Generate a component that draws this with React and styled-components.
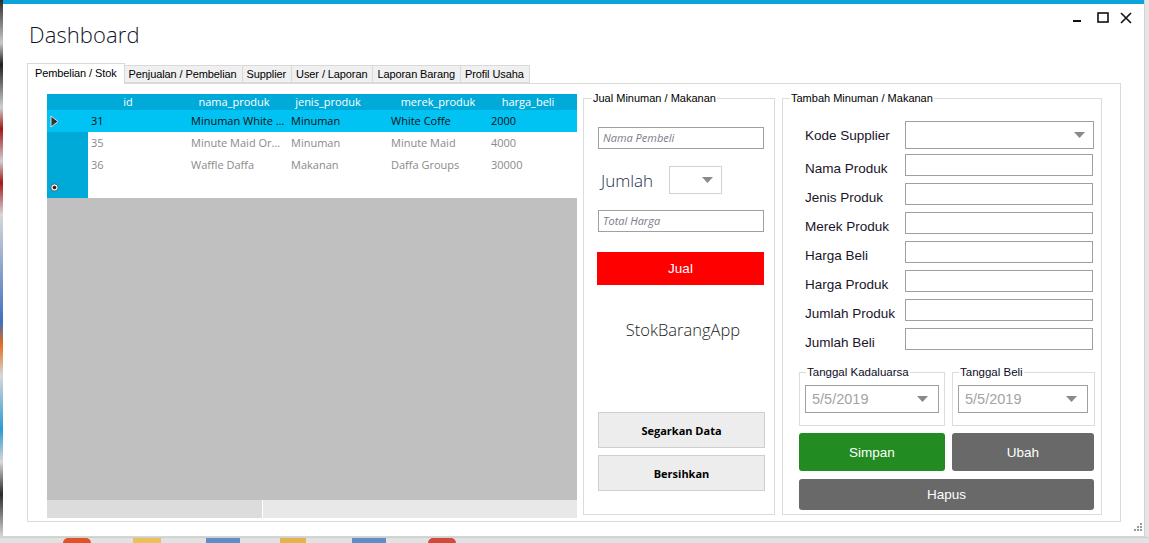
import React from "react";
import styled, { createGlobalStyle } from "styled-components";

const GlobalStyle = createGlobalStyle`
  html, body {
    margin: 0;
    padding: 0;
    background: #ffffff;
    overflow: hidden;
  }
  * {
    box-sizing: border-box;
  }
`;

const segoe = `"Open Sans", "Noto Sans", sans-serif`;
const msSans = `"Liberation Sans", Arial, sans-serif`;

const columns = [
  { name: "id", shift: 20 },
  { name: "nama_produk", shift: 8 },
  { name: "jenis_produk", shift: 20 },
  { name: "merek_produk", shift: 0 },
  { name: "harga_beli", shift: 20 },
];

const rows = [
  { id: "31", nama: "Minuman White Coffe", jenis: "Minuman", merek: "White Coffe", harga: "2000", selected: true },
  { id: "35", nama: "Minute Maid Orange", jenis: "Minuman", merek: "Minute Maid", harga: "4000" },
  { id: "36", nama: "Waffle Daffa", jenis: "Makanan", merek: "Daffa Groups", harga: "30000" },
];

const tabs = ["Pembelian / Stok", "Penjualan / Pembelian", "Supplier", "User / Laporan", "Laporan Barang", "Profil Usaha"];

const fields = ["Nama  Produk", "Jenis Produk", "Merek Produk", "Harga Beli", "Harga Produk", "Jumlah Produk", "Jumlah Beli"];

const taskIcons = [
  { w: 28, gap: 63, color: "#e0522a", round: true },
  { w: 28, gap: 42, color: "#e8c15a" },
  { w: 34, gap: 45, color: "#5d8fc4" },
  { w: 26, gap: 40, color: "#e3b449" },
  { w: 34, gap: 46, color: "#5d8fc4" },
  { w: 28, gap: 42, color: "#d24a3a", round: true },
];

function DropArrow() {
  return (
    <svg width="11" height="6" viewBox="0 0 11 6">
      <polygon points="0,0 11,0 5.5,6" fill="#8a8a8a" />
    </svg>
  );
}

export default function App() {
  return (
    <>
      <GlobalStyle />
      <Screen>
        <Desk>
          <LeftEdge />
          <Window>
            <TopBar />
            <Header>
              <Title>Dashboard</Title>
              <Controls>
                <svg width="12" height="12" viewBox="0 0 12 12">
                  <rect x="1" y="8" width="8" height="2" fill="#111" />
                </svg>
                <svg width="12" height="12" viewBox="0 0 12 12">
                  <rect x="1" y="1" width="10" height="9" fill="none" stroke="#111" strokeWidth="1.6" />
                </svg>
                <svg width="12" height="12" viewBox="0 0 12 12">
                  <path d="M1 1 L11 11 M11 1 L1 11" stroke="#111" strokeWidth="1.6" />
                </svg>
              </Controls>
            </Header>

            <TabStrip>
              {tabs.map((t, i) => (
                <Tab key={t} $active={i === 0}>
                  {t}
                </Tab>
              ))}
            </TabStrip>

            <TabPage>
              <Grid>
                <GridHeader>
                  <RowHeadCell $head />
                  {columns.map((c) => (
                    <HeadCell key={c.name} $shift={c.shift}>
                      {c.name}
                    </HeadCell>
                  ))}
                </GridHeader>
                {rows.map((r) => (
                  <GridRow key={r.id} $selected={r.selected}>
                    <RowHeadCell $selected={r.selected}>
                      {r.selected && (
                        <svg width="9" height="13" viewBox="0 0 9 13">
                          <polygon points="1,1 8,6.5 1,12" fill="#333" stroke="#e8e8e8" strokeWidth="0.9" />
                        </svg>
                      )}
                    </RowHeadCell>
                    <Cell $selected={r.selected}>{r.id}</Cell>
                    <Cell $selected={r.selected}>{r.nama}</Cell>
                    <Cell $selected={r.selected}>{r.jenis}</Cell>
                    <Cell $selected={r.selected}>{r.merek}</Cell>
                    <Cell $selected={r.selected}>{r.harga}</Cell>
                  </GridRow>
                ))}
                <GridRow>
                  <RowHeadCell>
                    <svg width="9" height="9" viewBox="0 0 9 9">
                      <circle cx="4.5" cy="4.5" r="3.6" fill="#eee" stroke="#555" strokeWidth="0.8" />
                      <circle cx="4.5" cy="4.5" r="1.8" fill="#222" />
                    </svg>
                  </RowHeadCell>
                  <Cell />
                  <Cell />
                  <Cell />
                  <Cell />
                  <Cell />
                </GridRow>
                <GridEmpty />
                <HScroll>
                  <ScrollThumb />
                  <ScrollTrack />
                </HScroll>
              </Grid>

              <SellGroup>
                <Legend>Jual Minuman / Makanan</Legend>
                <HintInput $top={22}>Nama Pembeli</HintInput>
                <QtyRow>
                  <BigLabel>Jumlah</BigLabel>
                  <SmallCombo>
                    <DropArrow />
                  </SmallCombo>
                </QtyRow>
                <HintInput $top={16}>Total Harga</HintInput>
                <SellButton>Jual</SellButton>
                <AppName>StokBarangApp</AppName>
                <PlainButton $top="auto">Segarkan Data</PlainButton>
                <PlainButton $top={7}>Bersihkan</PlainButton>
              </SellGroup>

              <AddGroup>
                <Legend>Tambah Minuman / Makanan</Legend>
                <FormRow $top={16}>
                  <FieldLabel $drop={0}>Kode Supplier</FieldLabel>
                  <Combo>
                    <DropArrow />
                  </Combo>
                </FormRow>
                {fields.map((f, i) => (
                  <FormRow key={f} $top={i === 0 ? 5 : 7}>
                    <FieldLabel $drop={7}>{f}</FieldLabel>
                    <TextBox />
                  </FormRow>
                ))}
                <DateRow>
                  <DateGroup $w={146}>
                    <SubLegend>Tanggal Kadaluarsa</SubLegend>
                    <DatePicker $w={134}>
                      <span>5/5/2019</span>
                      <DropArrow />
                    </DatePicker>
                  </DateGroup>
                  <DateGroup $w={143}>
                    <SubLegend>Tanggal Beli</SubLegend>
                    <DatePicker $w={130}>
                      <span>5/5/2019</span>
                      <DropArrow />
                    </DatePicker>
                  </DateGroup>
                </DateRow>
                <ActionRow>
                  <ActionButton $bg="#228b22" $w={146} $h={38}>
                    Simpan
                  </ActionButton>
                  <ActionButton $bg="#696969" $w={142} $h={38}>
                    Ubah
                  </ActionButton>
                </ActionRow>
                <ActionRow $top={8}>
                  <ActionButton $bg="#696969" $w={295} $h={31}>
                    Hapus
                  </ActionButton>
                </ActionRow>
              </AddGroup>
            </TabPage>

            <WindowFoot>
              <svg width="12" height="12" viewBox="0 0 12 12">
                {[
                  [9, 1],
                  [6, 4],
                  [9, 4],
                  [3, 7],
                  [6, 7],
                  [9, 7],
                ].map(([x, y]) => (
                  <rect key={`${x}-${y}`} x={x} y={y} width="2" height="2" fill="#9a9a9a" />
                ))}
              </svg>
            </WindowFoot>
          </Window>
          <RightEdge />
        </Desk>
        <Taskbar>
          {taskIcons.map((t, i) => (
            <TaskIcon key={i} $w={t.w} $gap={t.gap} $color={t.color} $round={t.round} />
          ))}
        </Taskbar>
      </Screen>
    </>
  );
}

const Screen = styled.div`
  width: 1149px;
  height: 543px;
  display: flex;
  flex-direction: column;
  overflow: hidden;
`;

const Desk = styled.div`
  display: flex;
  height: 537px;
`;

const LeftEdge = styled.div`
  width: 3px;
  background: linear-gradient(
    180deg,
    #2b2b2b 0%,
    #c9c9c9 8%,
    #1f1f1f 12%,
    #d0d0d0 20%,
    #a01818 24%,
    #d0d0d0 30%,
    #a01818 34%,
    #d8d8d8 40%,
    #3f6fc0 60%,
    #e46a1a 64%,
    #d8d8d8 70%,
    #2a9ad4 80%,
    #d8d8d8 86%,
    #2a2a2a 92%,
    #d8d8d8 100%
  );
`;

const RightEdge = styled.div`
  width: 5px;
  background: #e4e4e4;
  border-left: 1px solid #d2d2d2;
`;

const Window = styled.div`
  flex: 1;
  display: flex;
  flex-direction: column;
  background: #ffffff;
  border-bottom: 1px solid #d6d6d6;
`;

const TopBar = styled.div`
  height: 4px;
  background: #0aa3da;
`;

const Header = styled.div`
  height: 59px;
  display: flex;
  justify-content: space-between;
  align-items: flex-start;
  padding: 0 12px 0 26px;
`;

const Title = styled.h1`
  margin: 15px 0 0;
  font-family: ${segoe};
  font-weight: 300;
  font-size: 22px;
  color: #141428;
  letter-spacing: 0.1px;
`;

const Controls = styled.div`
  display: flex;
  gap: 11px;
  padding-top: 8px;
  svg:first-child {
    margin-right: 2px;
  }
`;

const TabStrip = styled.div`
  height: 20px;
  display: flex;
  align-items: flex-end;
  margin-left: 24px;
`;

const Tab = styled.div`
  height: ${(p) => (p.$active ? "21px" : "18px")};
  margin-bottom: ${(p) => (p.$active ? "-1px" : "0")};
  padding: ${(p) => (p.$active ? "2px 7px 0 7px" : "1px 5px 0 4px")};
  background: ${(p) => (p.$active ? "#ffffff" : "#f0f0f0")};
  border: 1px solid #d9d9d9;
  border-bottom: ${(p) => (p.$active ? "none" : "1px solid #d9d9d9")};
  border-left: ${(p) => (p.$active ? "1px solid #d9d9d9" : "none")};
  font-family: ${msSans};
  font-size: 11px;
  letter-spacing: -0.1px;
  line-height: 15px;
  color: #000;
  white-space: nowrap;
  position: relative;
  z-index: ${(p) => (p.$active ? 1 : 0)};
`;

const TabPage = styled.div`
  height: 439px;
  margin: 0 23px 0 24px;
  border: 1px solid #dadada;
  display: flex;
  align-items: flex-start;
  padding: 8px 0 0 19px;
`;

const Grid = styled.div`
  width: 530px;
  height: 424px;
  margin-top: 2px;
  background: #c0c0c0;
  display: flex;
  flex-direction: column;
  overflow: hidden;
`;

const GridHeader = styled.div`
  height: 16px;
  display: flex;
  background: #00aad8;
  flex-shrink: 0;
`;

const HeadCell = styled.div`
  width: 100px;
  flex-shrink: 0;
  text-align: center;
  padding-right: ${(p) => p.$shift}px;
  font-family: ${segoe};
  font-size: 11px;
  line-height: 15px;
  color: #ffffff;
  white-space: nowrap;
`;

const GridRow = styled.div`
  height: 22px;
  display: flex;
  flex-shrink: 0;
  background: ${(p) => (p.$selected ? "#00c3f3" : "#ffffff")};
`;

const RowHeadCell = styled.div`
  width: 41px;
  flex-shrink: 0;
  background: ${(p) => (p.$head ? "transparent" : p.$selected ? "#00c3f3" : "#00aad8")};
  display: flex;
  align-items: center;
  padding-left: 3px;
`;

const Cell = styled.div`
  width: 100px;
  flex-shrink: 0;
  padding: 0 3px;
  font-family: ${segoe};
  font-size: 11px;
  line-height: 22px;
  color: ${(p) => (p.$selected ? "#111111" : "#8a8a8a")};
  white-space: nowrap;
  overflow: hidden;
  text-overflow: ellipsis;
`;

const GridEmpty = styled.div`
  flex: 1;
`;

const HScroll = styled.div`
  height: 18px;
  display: flex;
  flex-shrink: 0;
`;

const ScrollThumb = styled.div`
  width: 216px;
  background: #dcdcdc;
  border-right: 1px solid #ffffff;
`;

const ScrollTrack = styled.div`
  flex: 1;
  background: #e8e8e8;
`;

const Group = styled.fieldset`
  margin: 0;
  padding: 0;
  min-width: 0;
  height: 423px;
  border: 1px solid #dcdcdc;
  display: flex;
  flex-direction: column;
`;

const SellGroup = styled(Group)`
  width: 192px;
  margin-left: 6px;
  padding: 0 9px 23px 14px;
`;

const AddGroup = styled(Group)`
  width: 320px;
  margin-left: 7px;
  padding: 0 0 0 16px;
`;

const Legend = styled.legend`
  padding: 0 1px;
  font-family: ${msSans};
  font-size: 11px;
  line-height: 13px;
  color: #000;
  ${SellGroup} & {
    margin-left: -6px;
  }
  ${AddGroup} & {
    margin-left: -9px;
  }
`;

const HintInput = styled.div`
  margin-top: ${(p) => p.$top}px;
  width: 166px;
  height: 22px;
  border: 1px solid #a0a0a0;
  padding-left: 4px;
  font-family: ${segoe};
  font-style: italic;
  font-size: 11px;
  line-height: 20px;
  color: #7b7b8c;
`;

const QtyRow = styled.div`
  margin-top: 17px;
  display: flex;
  align-items: center;
  height: 28px;
`;

const BigLabel = styled.span`
  width: 71px;
  padding-left: 3px;
  font-family: ${segoe};
  font-weight: 300;
  font-size: 17px;
  color: #1c2c4c;
`;

const SmallCombo = styled.div`
  width: 53px;
  height: 28px;
  border: 1px solid #d2d2d2;
  display: flex;
  align-items: center;
  justify-content: flex-end;
  padding-right: 8px;
`;

const SellButton = styled.div`
  margin-top: 20px;
  margin-left: -1px;
  width: 167px;
  height: 33px;
  background: #ff0000;
  color: #ffffff;
  font-family: ${msSans};
  font-size: 13.5px;
  display: flex;
  align-items: center;
  justify-content: center;
`;

const AppName = styled.div`
  margin-top: 33px;
  width: 166px;
  text-align: center;
  padding-left: 4px;
  font-family: ${segoe};
  font-weight: 300;
  font-size: 16.5px;
  color: #1c1c1c;
`;

const PlainButton = styled.div`
  margin-top: ${(p) => (p.$top === "auto" ? "auto" : `${p.$top}px`)};
  width: 167px;
  height: 36px;
  background: #ededed;
  border: 1px solid #cfcfcf;
  display: flex;
  align-items: center;
  justify-content: center;
  font-family: ${segoe};
  font-weight: 700;
  font-size: 11px;
  color: #000;
`;

const FormRow = styled.div`
  margin-top: ${(p) => p.$top}px;
  display: flex;
  align-items: center;
`;

const FieldLabel = styled.span`
  width: 106px;
  padding-left: 6px;
  padding-top: ${(p) => p.$drop}px;
  font-family: ${msSans};
  font-size: 13.5px;
  color: #1a1428;
  white-space: nowrap;
`;

const TextBox = styled.div`
  width: 188px;
  height: 22px;
  border: 1px solid #a0a0a0;
  background: #fff;
`;

const Combo = styled.div`
  width: 189px;
  height: 28px;
  border: 1px solid #a0a0a0;
  display: flex;
  align-items: center;
  justify-content: flex-end;
  padding-right: 8px;
`;

const DateRow = styled.div`
  margin-top: 16px;
  display: flex;
  gap: 7px;
`;

const DateGroup = styled.fieldset`
  margin: 0;
  padding: 0 0 12px 5px;
  min-width: 0;
  width: ${(p) => p.$w}px;
  border: 1px solid #dcdcdc;
`;

const SubLegend = styled.legend`
  margin-left: 1px;
  padding: 0 1px;
  font-family: ${msSans};
  font-size: 11.5px;
  line-height: 13px;
  color: #0c0c28;
`;

const DatePicker = styled.div`
  margin-top: 6px;
  width: ${(p) => p.$w}px;
  height: 28px;
  border: 1px solid #a0a0a0;
  display: flex;
  align-items: center;
  justify-content: space-between;
  padding: 0 10px 0 6px;
  font-family: ${msSans};
  font-size: 14.5px;
  color: #a4a4a4;
`;

const ActionRow = styled.div`
  margin-top: ${(p) => (p.$top ? p.$top : 7)}px;
  display: flex;
  gap: 7px;
`;

const ActionButton = styled.div`
  width: ${(p) => p.$w}px;
  height: ${(p) => p.$h}px;
  background: ${(p) => p.$bg};
  border-radius: 3px;
  color: #ffffff;
  font-family: ${msSans};
  font-size: 13.5px;
  display: flex;
  align-items: center;
  justify-content: center;
`;

const WindowFoot = styled.div`
  flex: 1;
  display: flex;
  justify-content: flex-end;
  align-items: flex-end;
  padding: 0 1px 2px 0;
`;

const Taskbar = styled.div`
  height: 6px;
  background: #e2e2e2;
  border-top: 1px solid #cfcfcf;
  display: flex;
  align-items: flex-start;
`;

const TaskIcon = styled.div`
  width: ${(p) => p.$w}px;
  height: 5px;
  margin-left: ${(p) => p.$gap}px;
  background: ${(p) => p.$color};
  border-radius: ${(p) => (p.$round ? "14px 14px 0 0" : "0")};
`;
